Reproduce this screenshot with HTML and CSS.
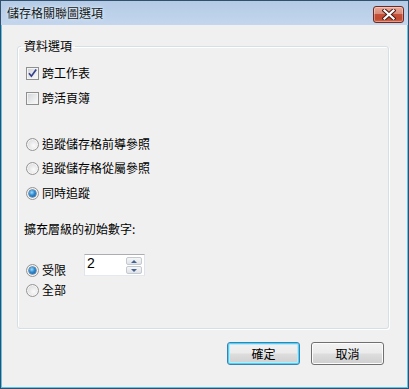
FILE: index.html
```html
<!DOCTYPE html>
<html lang="zh-Hant">
<head>
<meta charset="utf-8">
<title>儲存格關聯圖選項</title>
<link rel="stylesheet" href="styles.css">
</head>
<body>
<div class="window">
  <div class="titlebar">
    <span class="title">儲存格關聯圖選項</span>
    <span class="close">
      <svg width="14" height="11" viewBox="0 0 14 11">
        <path d="M2.5 1.5 L11.5 9.5 M11.5 1.5 L2.5 9.5" stroke="#4a1a16" stroke-width="4.2" stroke-linecap="square" fill="none"/>
        <path d="M2.5 1.5 L11.5 9.5 M11.5 1.5 L2.5 9.5" stroke="#ffffff" stroke-width="2.2" stroke-linecap="square" fill="none"/>
      </svg>
    </span>
  </div>
  <div class="client">
    <fieldset class="group">
      <legend class="legend">資料選項</legend>
      <div class="row cb1"><span class="check"><svg width="9" height="9" viewBox="0 0 9 9"><path d="M1 4.2 L3.4 7.2 L8.2 0.6" stroke="#34408c" stroke-width="1.7" fill="none"/></svg></span><span class="txt">跨工作表</span></div>
      <div class="row cb2"><span class="check"></span><span class="txt">跨活頁簿</span></div>
      <div class="row r1"><span class="radio"></span><span class="txt">追蹤儲存格前導參照</span></div>
      <div class="row r2"><span class="radio"></span><span class="txt">追蹤儲存格從屬參照</span></div>
      <div class="row r3"><span class="radio on"></span><span class="txt">同時追蹤</span></div>
      <div class="row lbl"><span class="txt">擴充層級的初始數字:</span></div>
      <div class="limit">
        <div class="row opt"><span class="radio on"></span><span class="txt">受限</span></div>
        <div class="spinner">
          <span class="value">2</span>
          <span class="spin">
            <span class="sbtn"><span class="up"></span></span>
            <span class="sbtn"><span class="down"></span></span>
          </span>
        </div>
      </div>
      <div class="row all"><span class="radio"></span><span class="txt">全部</span></div>
    </fieldset>
    <div class="buttons">
      <span class="btn default">確定</span>
      <span class="btn">取消</span>
    </div>
  </div>
</div>
</body>
</html>
```
FILE: styles.css
```css
html, body {
  margin: 0;
  padding: 0;
  background: #ffffff;
}
body {
  width: 409px;
  height: 389px;
  overflow: hidden;
  font-family: "Noto Sans CJK TC", "Liberation Sans", sans-serif;
  font-size: 12px;
  color: #000;
}
.window {
  box-sizing: border-box;
  width: 409px;
  height: 389px;
  border: 1px solid #31506e;
  background: linear-gradient(#b4cbe6 0px, #c3d6ed 24px, #5fc3e8 24px, #5fc3e8 100%);
  display: flex;
  flex-direction: column;
}
.titlebar {
  height: 24px;
  flex: none;
  display: flex;
  align-items: center;
  justify-content: space-between;
  padding: 0 4px 0 6px;
}
.title {
  line-height: 16px;
  color: #101820;
  text-shadow: 0 0 4px #e8f0fa, 0 0 2px #e8f0fa;
  margin-top: 0px;
}
.close {
  box-sizing: border-box;
  width: 31px;
  height: 17px;
  margin-top: 2px;
  border: 1px solid #6e2a22;
  border-radius: 3px;
  background: linear-gradient(#e9a99b 0%, #d88b78 45%, #c4503a 50%, #c0492f 80%, #d36d50 100%);
  box-shadow: inset 0 0 0 1px rgba(255,255,255,0.35);
  display: flex;
  align-items: center;
  justify-content: center;
}
.client {
  flex: 1;
  margin: 0 1px 1px 1px;
  background: #f0f0f0;
  padding: 14px 18px 0 15px;
  display: flex;
  flex-direction: column;
}
.group {
  margin: 0;
  padding: 0 0 30px 8px;
  border: 1px solid #d5dfe5;
  border-radius: 3px;
  box-shadow: 1px 1px 0 #ffffff, inset 1px 1px 0 #ffffff;
}
.legend {
  padding: 0 3px;
  margin-left: -5px;
  line-height: 14px;
  height: 14px;
}
.row {
  display: flex;
  align-items: center;
  height: 16px;
}
.txt {
  line-height: 16px;
  margin-left: 3px;
  white-space: nowrap;
}
.cb1 { margin-top: 12px; }
.cb2 { margin-top: 9px; }
.r1 { margin-top: 30px; }
.r2 { margin-top: 8px; }
.r3 { margin-top: 9px; }
.lbl { margin-top: 20px; }
.lbl .txt { margin-left: -2px; }
.limit {
  margin-top: 17px;
  height: 22px;
  display: flex;
  align-items: flex-end;
}
.opt {
  width: 58px;
  flex: none;
  margin-bottom: -2px;
}
.all { margin-top: 6px; }

.check {
  box-sizing: border-box;
  width: 13px;
  height: 13px;
  flex: none;
  border: 1px solid #8e8f8f;
  background: linear-gradient(135deg, #cfd2d6 0%, #e9eaec 55%, #fbfbfb 100%);
  box-shadow: inset 0 0 0 1px #f4f4f4;
  display: flex;
  align-items: center;
  justify-content: center;
}
.radio {
  box-sizing: border-box;
  width: 13px;
  height: 13px;
  flex: none;
  border-radius: 50%;
  border: 1px solid #959595;
  background: radial-gradient(circle at 60% 60%, #fbfbfb 0%, #e6e6e6 50%, #cdcdcd 100%);
  box-shadow: inset 0 0 0 1px #f6f6f6;
  display: flex;
  align-items: center;
  justify-content: center;
}
.radio.on::before {
  content: "";
  width: 7px;
  height: 7px;
  border-radius: 50%;
  background: radial-gradient(circle at 40% 35%, #9fdcff 0%, #2f8ad0 45%, #12508e 100%);
  box-shadow: 0 0 0 0.5px #1e4f80;
}

.spinner {
  box-sizing: border-box;
  width: 61px;
  height: 22px;
  border: 1px solid #abadb3;
  border-color: #abadb3 #e2e3ea #e3e9ef #e2e3ea;
  background: #ffffff;
  display: flex;
  justify-content: space-between;
  align-items: flex-start;
}
.value {
  font-family: "Liberation Sans", sans-serif;
  font-size: 14px;
  line-height: 15px;
  margin-left: 2px;
  margin-top: 1px;
}
.spin {
  display: flex;
  flex-direction: column;
  gap: 1px;
  margin: 2px 2px 0 0;
}
.sbtn {
  box-sizing: border-box;
  width: 16px;
  height: 8px;
  border: 1px solid #c4c8cf;
  border-radius: 2px;
  background: linear-gradient(#f6f6f6, #dfe3e8);
  display: flex;
  align-items: center;
  justify-content: center;
}
.up {
  width: 0;
  height: 0;
  border-left: 3px solid transparent;
  border-right: 3px solid transparent;
  border-bottom: 3px solid #45618f;
}
.down {
  width: 0;
  height: 0;
  border-left: 3px solid transparent;
  border-right: 3px solid transparent;
  border-top: 3px solid #45618f;
}

.buttons {
  margin-top: 13px;
  display: flex;
  justify-content: flex-end;
  gap: 11px;
  padding-right: 5px;
}
.btn {
  box-sizing: border-box;
  width: 73px;
  height: 23px;
  border: 1px solid #707070;
  border-radius: 3px;
  background: linear-gradient(#f2f2f2 0%, #ebebeb 48%, #dddddd 52%, #cfcfcf 100%);
  box-shadow: inset 0 0 0 1px #fcfcfc;
  display: flex;
  align-items: center;
  justify-content: center;
  line-height: 16px;
}
.btn.default {
  border-color: #3c7fb1;
  box-shadow: inset 0 0 0 1px #48d6f8, inset 0 0 0 2px #bde8f8;
}
```
